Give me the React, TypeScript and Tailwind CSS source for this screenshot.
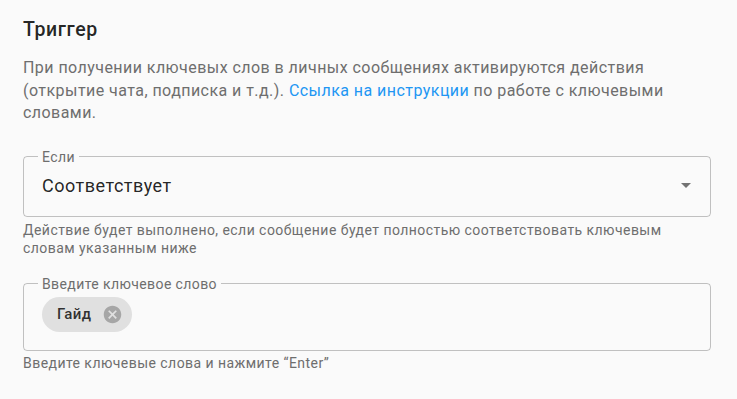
import { useState } from 'react'

const font = "font-['Roboto','Liberation_Sans',sans-serif]"

function ArrowDropDown() {
  return (
    <svg className="h-6 w-6 shrink-0" viewBox="0 0 24 24" fill="rgba(0,0,0,0.54)">
      <path d="M7 10l5 5 5-5z" />
    </svg>
  )
}

function CancelIcon() {
  return (
    <svg className="h-[21px] w-[21px]" viewBox="0 0 24 24" fill="rgba(0,0,0,0.26)">
      <path d="M12 2C6.47 2 2 6.47 2 12s4.47 10 10 10 10-4.47 10-10S17.53 2 12 2zm5 13.59L15.59 17 12 13.41 8.41 17 7 15.59 10.59 12 7 8.41 8.41 7 12 10.59 15.59 7 17 8.41 13.41 12 17 15.59z" />
    </svg>
  )
}

export default function App() {
  const [keywords, setKeywords] = useState(['Гайд'])

  return (
    <div className={`min-h-screen bg-[#fafafa] px-[23px] pt-[18px] ${font}`}>
      <div className="w-[688px]">
        <h2 className="text-[19.5px] font-medium leading-[24px] tracking-[0.6px] text-[rgba(0,0,0,0.87)]">Триггер</h2>
        <p className="mt-[15px] text-[16px] leading-[22.5px] tracking-[0.45px] text-[#6e6e6e]">
          При получении ключевых слов в личных сообщениях активируются действия (открытие чата, подписка и т.д.).{' '}
          <a href="#" className="text-[#2196f3]">Ссылка на инструкции</a> по работе с ключевыми словами.
        </p>

        {/* select */}
        <fieldset className="mt-[24px] rounded-[4px] border border-[rgba(0,0,0,0.23)] px-[18px]">
          <legend className="-ml-[4px] px-[4px] text-[14px] leading-[16px] tracking-[0.4px] text-[#6e6e6e]">Если</legend>
          <div className="flex h-[51px] items-center justify-between pb-[10px]">
            <span className="text-[18px] tracking-[0.5px] text-[rgba(0,0,0,0.87)]">Соответствует</span>
            <span className="-mr-[6px]">
              <ArrowDropDown />
            </span>
          </div>
        </fieldset>
        <p className="mt-[4px] text-[14px] leading-[18px] tracking-[0.45px] text-[#6e6e6e]">
          Действие будет выполнено, если сообщение будет полностью соответствовать ключевым словам указанным ниже
        </p>

        {/* keywords */}
        <fieldset className="mt-[19px] rounded-[4px] border border-[rgba(0,0,0,0.23)] px-[18px]">
          <legend className="-ml-[4px] px-[4px] text-[14px] leading-[16px] tracking-[0.4px] text-[#6e6e6e]">
            Введите ключевое слово
          </legend>
          <div className="flex h-[58px] items-start gap-2 pt-[5px]">
            {keywords.map((k) => (
              <div key={k} className="flex h-[35px] items-center rounded-full bg-[#e0e0e0] pl-[15px] pr-[9px]">
                <span className="text-[15px] font-medium tracking-[0.4px] text-[rgba(0,0,0,0.8)]">{k}</span>
                <button
                  type="button"
                  onClick={() => setKeywords(keywords.filter((x) => x !== k))}
                  className="ml-[11px] flex items-center"
                >
                  <CancelIcon />
                </button>
              </div>
            ))}
          </div>
        </fieldset>
        <p className="mt-[3px] text-[14px] leading-[18px] tracking-[0.45px] text-[#6e6e6e]">
          Введите ключевые слова и нажмите “Enter”
        </p>
      </div>
    </div>
  )
}
